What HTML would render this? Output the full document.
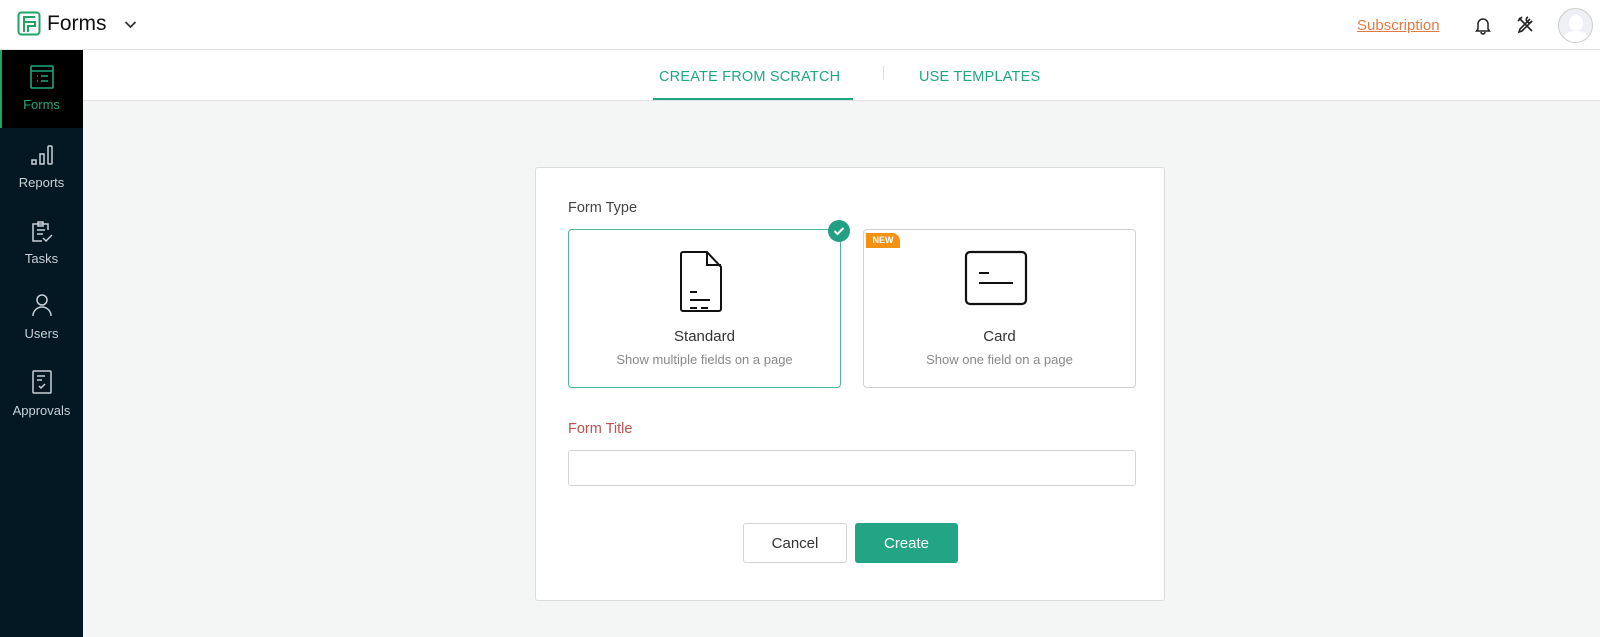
<!DOCTYPE html><html><head><style>
*{box-sizing:border-box;margin:0;padding:0}
body{width:1600px;height:637px;overflow:hidden;font-family:"Liberation Sans",sans-serif;background:#f4f5f5;position:relative}
.hdr{position:absolute;left:0;top:0;width:1600px;height:50px;background:#fff;border-bottom:1px solid #e4e4e4}
.side{position:absolute;left:0;top:50px;width:83px;height:587px;background:#041824}
.it{position:absolute;left:0;width:83px;text-align:center;color:#c9d0d6;font-size:13px}
.it svg{display:block;margin:0 auto 8px}
.tabs{position:absolute;left:83px;top:50px;right:0;height:51px;background:#fff;border-bottom:1px solid #e2e2e2}
.card{position:absolute;left:535px;top:167px;width:630px;height:434px;background:#fff;border:1px solid #dcdcdc;border-radius:3px}
.opt{position:absolute;top:61px;width:273px;height:159px;border:1px solid #d2d2d2;border-radius:4px;text-align:center}
.opt .t{position:absolute;top:98px;width:100%;font-size:15px;color:#333}
.opt .s{position:absolute;top:122px;width:100%;font-size:13px;color:#888}
</style></head><body>
<div class="hdr">
<svg style="position:absolute;left:17px;top:11px" width="24" height="25" viewBox="0 0 24 25"><rect x="1.5" y="1.5" width="21" height="22" rx="3" fill="none" stroke="#1fa463" stroke-width="2"/><path d="M7 21V6h11M7 11h11v4H11v6" fill="none" stroke="#1fa463" stroke-width="2"/></svg>
<div style="position:absolute;left:47px;top:12px;font-size:21px;color:#111">Forms</div>
<svg style="position:absolute;left:124px;top:20px" width="13" height="9"><path d="M1.5 2l5 5 5-5" fill="none" stroke="#333" stroke-width="1.8"/></svg>
<div style="position:absolute;left:1357px;top:17px;font-size:15px;color:#e07b45;text-decoration:underline">Subscription</div>
<svg style="position:absolute;left:1474px;top:15px" width="18" height="20" viewBox="0 0 18 20"><path d="M4 14V9a5 5 0 0110 0v5l1.5 2h-13z M7 17a2 2 0 004 0" fill="none" stroke="#222" stroke-width="1.5"/></svg>
<svg style="position:absolute;left:1516px;top:15px" width="19" height="19" viewBox="0 0 19 19"><path d="M3 3l13 13M2 6l4-4M12 2a3 3 0 104 4l-10 10-3 1 1-3 10-10" fill="none" stroke="#222" stroke-width="1.6"/></svg>
<div style="position:absolute;left:1558px;top:8px;width:35px;height:35px;border-radius:50%;border:1px solid #ccc;background:#eef0f5;overflow:hidden"><div style="position:absolute;left:10px;top:6px;width:14px;height:16px;border-radius:50%;background:#fff"></div><div style="position:absolute;left:4px;top:22px;width:26px;height:16px;border-radius:50% 50% 0 0;background:#fff"></div></div>
</div>
<div class="side">
<div style="position:absolute;left:0;top:0;width:83px;height:78px;background:#000;border-left:2px solid #1fa463"></div>
<div class="it" style="top:15px;color:#1fa880"><svg width="24" height="24" viewBox="0 0 24 24"><rect x="1" y="1" width="22" height="22" rx="1" fill="none" stroke="#1fa880" stroke-width="1.6"/><path d="M1 6h22M7 11h1M11 11h7M7 16h1M11 16h7" stroke="#1fa880" stroke-width="1.6"/></svg>Forms</div>
<div class="it" style="top:94px"><svg width="24" height="23" viewBox="0 0 24 23"><rect x="2" y="16" width="4" height="4" fill="none" stroke="#c9d0d6" stroke-width="1.5"/><rect x="10" y="10" width="4" height="10" fill="none" stroke="#c9d0d6" stroke-width="1.5"/><rect x="18" y="2" width="4" height="18" rx="1" fill="none" stroke="#c9d0d6" stroke-width="1.5"/></svg>Reports</div>
<div class="it" style="top:169px"><svg width="24" height="24" viewBox="0 0 24 24"><path d="M18 11V5H3v17h9M8 3h5v4H8zM7 11h8M7 15h6M13 19l3 3 6-6" fill="none" stroke="#c9d0d6" stroke-width="1.5"/></svg>Tasks</div>
<div class="it" style="top:243px"><svg width="24" height="25" viewBox="0 0 24 25"><circle cx="12" cy="7" r="5" fill="none" stroke="#c9d0d6" stroke-width="1.5"/><path d="M3 23a9 9 0 0118 0" fill="none" stroke="#c9d0d6" stroke-width="1.5"/></svg>Users</div>
<div class="it" style="top:319px"><svg width="24" height="26" viewBox="0 0 24 26"><rect x="3" y="2" width="18" height="22" rx="1" fill="none" stroke="#c9d0d6" stroke-width="1.5"/><path d="M7 7h8M7 11h5M9 17l2 2 4-4" fill="none" stroke="#c9d0d6" stroke-width="1.5"/></svg>Approvals</div>
</div>
<div class="tabs">
<div style="position:absolute;left:576px;top:19px;font-size:14.5px;color:#1fa880;letter-spacing:.2px">CREATE FROM SCRATCH</div>
<div style="position:absolute;left:570px;top:48px;width:200px;height:2px;background:#1fa880"></div>
<div style="position:absolute;left:800px;top:16px;width:1px;height:14px;background:#ddd"></div>
<div style="position:absolute;left:836px;top:19px;font-size:14.5px;color:#1fa880;letter-spacing:.2px">USE TEMPLATES</div>
</div>
<div class="card">
<div style="position:absolute;left:32px;top:32px;font-size:14.5px;color:#444">Form Type</div>
<div class="opt" style="left:32px;border-color:#4bb49a">
<div style="position:absolute;right:-10px;top:-10px;width:22px;height:22px;border-radius:50%;background:#21a083"><svg width="22" height="22"><path d="M6.5 11l3 3 6-6" fill="none" stroke="#fff" stroke-width="2"/></svg></div>
<svg style="position:absolute;left:109px;top:20px" width="46" height="64" viewBox="0 0 46 64"><path d="M5 2h24l14 15v42a2 2 0 01-2 2H5a2 2 0 01-2-2V4a2 2 0 012-2zM29 2v13h14M12 42h7M12 50h20M12 58h7M23 58h7" fill="none" stroke="#111" stroke-width="2"/></svg>
<div class="t">Standard</div><div class="s">Show multiple fields on a page</div></div>
<div class="opt" style="left:327px">
<div style="position:absolute;left:2px;top:3px;width:34px;height:15px;background:#f39212;border-radius:0 8px 0 0;color:#fff;font-size:9px;font-weight:bold;line-height:15px">NEW</div>
<svg style="position:absolute;left:100px;top:20px" width="64" height="56" viewBox="0 0 64 56"><rect x="2" y="2" width="60" height="52" rx="4" fill="none" stroke="#111" stroke-width="2.2"/><path d="M15 23h10M15 33h34" stroke="#111" stroke-width="2"/></svg>
<div class="t">Card</div><div class="s">Show one field on a page</div></div>
<div style="position:absolute;left:32px;top:253px;font-size:14.5px;color:#c0504d">Form Title</div>
<div style="position:absolute;left:32px;top:282px;width:568px;height:36px;border:1px solid #d4d4d4;border-radius:3px"></div>
<div style="position:absolute;left:207px;top:355px;width:104px;height:40px;border:1px solid #d4d4d4;border-radius:3px;text-align:center;line-height:40px;font-size:15px;color:#333">Cancel</div>
<div style="position:absolute;left:319px;top:355px;width:103px;height:40px;background:#22a585;border-radius:3px;text-align:center;line-height:42px;font-size:15px;color:#fff">Create</div>
</div>
</body></html>
